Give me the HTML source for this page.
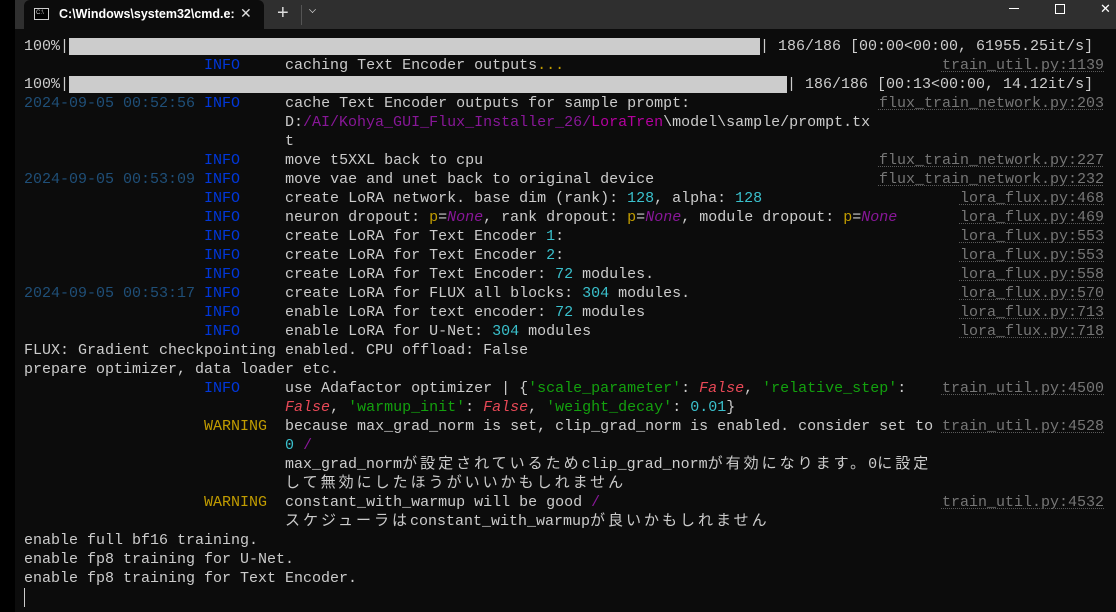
<!DOCTYPE html>
<html><head><meta charset="utf-8"><style>
*{margin:0;padding:0;box-sizing:border-box}
html,body{width:1116px;height:612px;overflow:hidden;background:#0c0c0c}
body{position:relative;font-family:"Liberation Mono","Noto Sans CJK JP",monospace;font-size:15px;color:#cccccc}
#strip{position:absolute;left:0;top:0;width:15px;height:612px;background:#000}
#title{position:absolute;left:15px;top:0;width:1101px;height:29px;background:#2f2f2f}
#tab{position:absolute;left:24px;top:0;width:240px;height:29px;background:#0c0c0c;border-radius:6px 6px 0 0;font-family:"Liberation Sans",sans-serif;font-size:13px;color:#fff}
#term{position:absolute;left:0;top:37px;width:1116px}
.r{height:19px;line-height:19px;white-space:pre;padding-left:24px;position:relative}
.f{position:absolute;right:12px;top:0;color:#767676;text-decoration:underline dotted #5a5a5a;text-decoration-thickness:1px;text-underline-offset:2px}
.d{color:#1f4f78}.i{color:#0037da}.w{color:#c19c00}.n{color:#3ac0cc}
.pu{color:#881798}.mg{color:#b4009e}.y{color:#c19c00}.it{font-style:italic}
.fa{color:#e74856;font-style:italic}.g{color:#13a10e}
.bar{display:inline-block;height:17px;background:#cccccc;vertical-align:top;margin-top:1px}
.j{letter-spacing:3px}
</style></head><body>
<div id="strip"></div>
<div id="title">
</div>
<div id="tab">
 <div style="position:absolute;left:10px;top:8px;width:15px;height:12px;border:1px solid #ccc;background:#000;font-size:6px;line-height:9px;color:#ccc;padding-left:1px">C:\</div>
 <div style="position:absolute;left:35px;top:7px;white-space:nowrap;font-weight:bold;font-size:12.5px">C:\Windows\system32\cmd.e:</div>
 <div style="position:absolute;left:216px;top:5px;font-size:14px;color:#ddd">✕</div>
</div>
<div style="position:absolute;left:277px;top:2px;color:#ddd;font-family:'Liberation Sans',sans-serif;font-size:20px">+</div>
<div style="position:absolute;left:301px;top:5px;width:1px;height:20px;background:#555"></div>
<div style="position:absolute;left:309px;top:6px;width:7px;height:7px;border-right:1.3px solid #ccc;border-bottom:1.3px solid #ccc;transform:rotate(45deg) scale(.7)"></div>
<div style="position:absolute;left:1009px;top:8px;width:10px;height:1px;background:#fff"></div>
<div style="position:absolute;left:1055px;top:4px;width:10px;height:10px;border:1px solid #fff"></div>
<div style="position:absolute;left:1100px;top:1px;color:#fff;font-family:'Liberation Sans',sans-serif;font-size:13px">✕</div>
<div id="term">
<div class="r">100%|<span class="bar" style="width:691px"></span>| 186/186 [00:00&lt;00:00, 61955.25it/s]</div>
<div class="r">                    <span class="i">INFO</span>     caching Text Encoder outputs<span class="y">...</span><span class="f">train_util.py:1139</span></div>
<div class="r">100%|<span class="bar" style="width:718px"></span>| 186/186 [00:13&lt;00:00, 14.12it/s]</div>
<div class="r"><span class="d">2024-09-05 00:52:56</span> <span class="i">INFO</span>     cache Text Encoder outputs for sample prompt:<span class="f">flux_train_network.py:203</span></div>
<div class="r">                             D:<span class="pu">/AI/Kohya_GUI_Flux_Installer_26/</span><span class="mg">LoraTren</span>\model\sample/prompt.tx</div>
<div class="r">                             t</div>
<div class="r">                    <span class="i">INFO</span>     move t5XXL back to cpu<span class="f">flux_train_network.py:227</span></div>
<div class="r"><span class="d">2024-09-05 00:53:09</span> <span class="i">INFO</span>     move vae and unet back to original device<span class="f">flux_train_network.py:232</span></div>
<div class="r">                    <span class="i">INFO</span>     create LoRA network. base dim (rank): <span class="n">128</span>, alpha: <span class="n">128</span><span class="f">lora_flux.py:468</span></div>
<div class="r">                    <span class="i">INFO</span>     neuron dropout: <span class="y">p</span>=<span class="pu it">None</span>, rank dropout: <span class="y">p</span>=<span class="pu it">None</span>, module dropout: <span class="y">p</span>=<span class="pu it">None</span><span class="f">lora_flux.py:469</span></div>
<div class="r">                    <span class="i">INFO</span>     create LoRA for Text Encoder <span class="n">1</span>:<span class="f">lora_flux.py:553</span></div>
<div class="r">                    <span class="i">INFO</span>     create LoRA for Text Encoder <span class="n">2</span>:<span class="f">lora_flux.py:553</span></div>
<div class="r">                    <span class="i">INFO</span>     create LoRA for Text Encoder: <span class="n">72</span> modules.<span class="f">lora_flux.py:558</span></div>
<div class="r"><span class="d">2024-09-05 00:53:17</span> <span class="i">INFO</span>     create LoRA for FLUX all blocks: <span class="n">304</span> modules.<span class="f">lora_flux.py:570</span></div>
<div class="r">                    <span class="i">INFO</span>     enable LoRA for text encoder: <span class="n">72</span> modules<span class="f">lora_flux.py:713</span></div>
<div class="r">                    <span class="i">INFO</span>     enable LoRA for U-Net: <span class="n">304</span> modules<span class="f">lora_flux.py:718</span></div>
<div class="r">FLUX: Gradient checkpointing enabled. CPU offload: False</div>
<div class="r">prepare optimizer, data loader etc.</div>
<div class="r">                    <span class="i">INFO</span>     use Adafactor optimizer | {<span class="g">'scale_parameter'</span>: <span class="fa">False</span>, <span class="g">'relative_step'</span>:<span class="f">train_util.py:4500</span></div>
<div class="r">                             <span class="fa">False</span>, <span class="g">'warmup_init'</span>: <span class="fa">False</span>, <span class="g">'weight_decay'</span>: <span class="n">0.01</span>}</div>
<div class="r">                    <span class="w">WARNING</span>  because max_grad_norm is set, clip_grad_norm is enabled. consider set to<span class="f">train_util.py:4528</span></div>
<div class="r">                             <span class="n">0</span> <span class="pu">/</span></div>
<div class="r">                             max_grad_norm<span class="j">が設定されているため</span>clip_grad_norm<span class="j">が有効になります。</span>0<span class="j">に設定</span></div>
<div class="r">                             <span class="j">して無効にしたほうがいいかもしれません</span></div>
<div class="r">                    <span class="w">WARNING</span>  constant_with_warmup will be good <span class="pu">/</span><span class="f">train_util.py:4532</span></div>
<div class="r">                             <span class="j">スケジューラは</span>constant_with_warmup<span class="j">が良いかもしれません</span></div>
<div class="r">enable full bf16 training.</div>
<div class="r">enable fp8 training for U-Net.</div>
<div class="r">enable fp8 training for Text Encoder.</div>
<div class="r"><span style="display:inline-block;width:1px;height:19px;background:#ccc;vertical-align:top"></span></div>
</div>
</body></html>
